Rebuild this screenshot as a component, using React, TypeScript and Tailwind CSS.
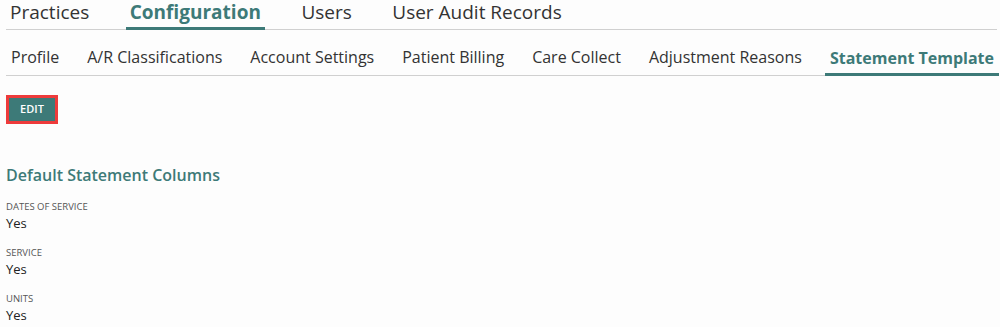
import React from "react";

const top = ["Practices", "Configuration", "Users", "User Audit Records"];
const sub = [
  "Profile",
  "A/R Classifications",
  "Account Settings",
  "Patient Billing",
  "Care Collect",
  "Adjustment Reasons",
  "Statement Template",
];

const fields = [
  { label: "DATES OF SERVICE", value: "Yes" },
  { label: "SERVICE", value: "Yes" },
  { label: "UNITS", value: "Yes" },
];

export default function App() {
  return (
    <div
      className="w-[1000px] h-[327px] overflow-hidden bg-[#fdfdfd] text-[#333]"
      style={{ fontFamily: '"Open Sans", "Liberation Sans", sans-serif' }}
    >
      <div className="ml-[6px] mr-[3px]">
        <div className="flex gap-[32.5px] border-b border-[#d0d0d0] h-[30px]">
          {top.map((t) => {
            const active = t === "Configuration";
            return (
              <div
                key={t}
                className={`px-[4px] text-[19px] leading-[24px] whitespace-nowrap ${
                  active
                    ? "font-bold text-[#3d7a78] border-b-[3px] border-[#3d7a78] h-[30px]"
                    : "text-[#333]"
                }`}
              >
                {t}
              </div>
            );
          })}
        </div>
        <div className="flex gap-[18px] border-b border-[#d0d0d0] h-[46px] items-end">
          {sub.map((t) => {
            const active = t === "Statement Template";
            return (
              <div
                key={t}
                className={`px-[5px] text-[16px] leading-[22px] h-[29px] whitespace-nowrap ${
                  active
                    ? "font-bold text-[#3d7a78] border-b-[3px] border-[#3d7a78] -mb-px"
                    : "text-[#333]"
                }`}
              >
                {t}
              </div>
            );
          })}
        </div>
        <div className="pt-[19px]">
          <button className="h-[29px] w-[52px] border-[3px] border-[#ee3b3b] bg-[#3d7a78] text-white text-[11px] font-semibold flex items-center justify-center">
            EDIT
          </button>
        </div>
        <div className="mt-[40px] text-[16px] font-semibold text-[#3d7a78] leading-[22px]">
          Default Statement Columns
        </div>
        <div className="mt-[14px] flex flex-col gap-[14px]">
          {fields.map((f) => (
            <div key={f.label}>
              <div className="text-[9.5px] leading-[14px] text-[#555] uppercase">
                {f.label}
              </div>
              <div className="text-[13px] leading-[18px] text-[#222]">{f.value}</div>
            </div>
          ))}
        </div>
      </div>
    </div>
  );
}
